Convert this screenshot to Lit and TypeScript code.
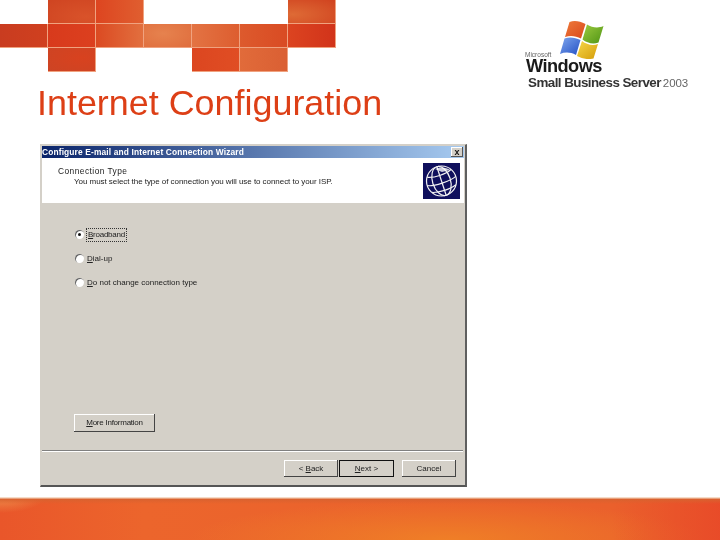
import { LitElement, html, css, svg } from "lit";
import { customElement } from "lit/decorators.js";

const cells: [number, number, string][] = [
  [2, 1, "radial-gradient(ellipse at 80% 70%,#d9532a,#cf4421)"],
  [3, 1, "linear-gradient(90deg,#dd4520,#e05f30)"],
  [7, 1, "radial-gradient(ellipse at 10% 60%,#de6a35,#d0421f)"],
  [1, 2, "linear-gradient(90deg,#c93c20,#d0401f)"],
  [2, 2, "linear-gradient(90deg,#d83a1c,#dc401f)"],
  [3, 2, "linear-gradient(90deg,#db4a22,#e2703f)"],
  [4, 2, "radial-gradient(ellipse at 40% 40%,#e6824e,#df6c3c)"],
  [5, 2, "linear-gradient(90deg,#e37343,#dd5d2f)"],
  [6, 2, "linear-gradient(90deg,#dd5a2d,#d94b23)"],
  [7, 2, "linear-gradient(90deg,#dc4420,#d1331a)"],
  [2, 3, "radial-gradient(ellipse at 70% 40%,#d8421f,#cc4424)"],
  [5, 3, "linear-gradient(90deg,#dc4620,#e04e24)"],
  [6, 3, "linear-gradient(90deg,#e16b3a,#da5f33)"],
];

const globe = svg`<svg width="37" height="36" viewBox="0 0 37 36">
  <rect width="37" height="36" fill="#0f0f5c"/>
  <g fill="none" stroke="#f2f2f2" stroke-width="1.200">
    <circle cx="18.500" cy="18" r="15"/>
    <g transform="rotate(-18 18.500 18)">
      <ellipse cx="18.500" cy="18" rx="9" ry="15"/>
      <path d="M18.500 3V33"/>
      <path d="M3.500 18C10 21 27 21 33.500 18"/>
      <path d="M6 10C12 13 25 13 31 10"/>
      <path d="M6 26C12 28.500 25 28.500 31 26"/>
    </g>
  </g>
  <path d="M12 6C16 3.500 24 4 27 7L19 9Z" fill="#fff" opacity=".8"/>
</svg>`;

const flag = svg`<svg class="flag" width="44" height="38" viewBox="0 0 44 38">
  <defs>
    <linearGradient id="r" x1="0" y1="0" x2="1" y2="1"><stop offset="0" stop-color="#ee7a3a"/><stop offset="1" stop-color="#d9481c"/></linearGradient>
    <linearGradient id="g" x1="0" y1="0" x2="1" y2="1"><stop offset="0" stop-color="#9ccb3f"/><stop offset="1" stop-color="#4f9414"/></linearGradient>
    <linearGradient id="b" x1="0" y1="0" x2="1" y2="1"><stop offset="0" stop-color="#7ea6ee"/><stop offset="1" stop-color="#2450c4"/></linearGradient>
    <linearGradient id="y" x1="0" y1="0" x2="1" y2="1"><stop offset="0" stop-color="#f7d84a"/><stop offset="1" stop-color="#d49c08"/></linearGradient>
  </defs>
  <path d="M9.500 1C15 -1 20 0.500 25.500 3L21 17.500C16 15 10.500 14 5 16Z" fill="url(#r)"/>
  <path d="M27 3.500C32 6.500 38 7.500 43.500 5L38.500 21.500C33 23.500 27 22 22.500 18.500Z" fill="url(#g)"/>
  <path d="M4.500 17.500C10 15.500 15 16.500 20.500 19L16 34C10.500 31 5 31 0 33Z" fill="url(#b)"/>
  <path d="M22 20C26.500 23.500 32.500 25 38 23L33.500 37.500C27.500 39 22 37.500 17 35Z" fill="url(#y)"/>
</svg>`;

@customElement("app-root")
export class AppRoot extends LitElement {
  static styles = css`
    :host { display: block; width: 720px; height: 540px; background: #fff; overflow: hidden; font-family: "Liberation Sans", Arial, sans-serif; }
    .page { height: 540px; display: flex; flex-direction: column; }
    .top { display: flex; height: 144px; flex: none; }
    .left { width: 525px; flex: none; }
    .mosaic { display: grid; grid-template-columns: repeat(7, 48px); grid-auto-rows: 24px; width: 336px; height: 72px; }
    .cell { box-shadow: inset -1px -1px 0 #f0a27f; filter: blur(.3px); }
    h1 { margin: 12px 0 0 37px; font-size: 35.900px; line-height: 38px; font-weight: 400; color: #dd3f16; white-space: nowrap; filter: blur(.25px); }
    .logo { padding-top: 21px; width: 180px; filter: blur(.35px); color: #111; }
    .flag { display: block; margin-left: 35px; }
    .ms { font-size: 6.500px; line-height: 7px; margin: -8px 0 1px 0; color: #666; }
    .win { font-size: 18.200px; line-height: 15px; font-weight: 700; letter-spacing: -.55px; margin-left: 1px; color: #1a1a1a; }
    .sbs { display: flex; align-items: baseline; margin: 1px 0 0 3px; white-space: nowrap; font-size: 13.400px; line-height: 15px; font-weight: 700; letter-spacing: -.55px; color: #333; }
    .yr { font-weight: 400; font-size: 11.500px; letter-spacing: -.1px; color: #666; margin-left: 2px; }

    .dialog { margin-left: 40px; width: 427px; height: 343px; flex: none; box-sizing: border-box; background: #d4d0c8; display: flex; flex-direction: column; padding: 1px 1px 0 1px;
      border-top: 1px solid #d4d0c8; border-left: 1px solid #d4d0c8; border-right: 2px solid #5f5f5f; border-bottom: 2px solid #555; }
    .tbar { height: 12px; flex: none; display: flex; align-items: center; justify-content: space-between; background: linear-gradient(90deg,#0a246a,#a6caf0); color: #fff; font: 700 8.400px/12px "Liberation Sans", sans-serif; letter-spacing: .14px; filter: blur(.25px); }
    .close { width: 12px; height: 10px; margin-right: 1px; background: #d4d0c8; color: #111; box-shadow: inset -1px -1px 0 #555, inset 1px 1px 0 #fff; font: 700 9px/10px "Liberation Sans", sans-serif; letter-spacing: 0; text-align: center; }
    .hdr { height: 45px; flex: none; background: #fff; display: flex; justify-content: space-between; }
    .hdr-text { padding: 8px 0 0 16px; font: 400 8px/10px "Liberation Sans", sans-serif; color: #222; filter: blur(.35px); }
    .hdr-text b { display: block; font-weight: 400; font-size: 8.400px; letter-spacing: .45px; }
    .hdr-text span { display: block; margin: 1px 0 0 16px; letter-spacing: -.05px; white-space: nowrap; }
    .globe { margin: 5px 4px 0 0; filter: blur(.3px); }
    .body { flex: 1; padding: 26px 0 0 32px; display: flex; flex-direction: column; font: 400 8px/12px "Liberation Sans", sans-serif; color: #222; }
    .opt { display: flex; align-items: center; height: 12px; margin-bottom: 12px; filter: blur(.35px); }
    .radio { width: 9px; height: 9px; margin-left: 1px; border-radius: 50%; background: #fff; box-shadow: inset 1px 1px 0 #666; margin-right: 3px; display: flex; align-items: center; justify-content: center; flex: none; position: relative; top: -1px; }
    .radio i { width: 3px; height: 3px; border-radius: 50%; background: #111; }
    .focus { outline: 1px dotted #333; padding: 0 1px; letter-spacing: -.25px; }
    u { text-decoration: underline; }
    .more { margin-top: auto; margin-bottom: 18px; width: 81px; height: 18px; flex: none; letter-spacing: -.25px; }
    .btn { background: #d4d0c8; box-shadow: inset -1px -1px 0 #444, inset 1px 1px 0 #fff; display: flex; align-items: center; justify-content: center; font: 400 8px/12px "Liberation Sans", sans-serif; color: #222; filter: blur(.3px); }
    .sep { height: 2px; flex: none; background: linear-gradient(#808080 50%, #fff 50%); margin-right: 1px; }
    .foot { height: 33px; flex: none; display: flex; justify-content: flex-end; align-items: flex-start; padding: 8px 8px 0 0; box-sizing: border-box; }
    .foot .btn { width: 54px; height: 17px; }
    .foot .next { width: 55px; box-shadow: inset 0 0 0 1px #111; margin: 0 8px 0 1px; }

    .spacer { height: 10px; flex: none; }
    .footer { flex: 1; background: linear-gradient(#f6dcc8 0, #f6dcc8 1px, #d9622f 2px, rgba(217,98,47,0) 7px), radial-gradient(ellipse 45px 16px at 0 0, rgba(238,150,80,.85), rgba(238,150,80,0)), linear-gradient(90deg, rgba(232,72,36,0) 85%, rgba(232,72,40,.85) 100%), radial-gradient(ellipse 260px 40px at 62% 100%, rgba(240,130,38,.9), rgba(240,130,38,0)), linear-gradient(90deg, #e9562a, #ec652c 20%, #ea622c 60%, #ea5f2c); }
  `;

  render() {
    return html`<div class="page">
      <div class="top">
        <div class="left">
          <div class="mosaic">
            ${cells.map(([c, r, bg]) => html`<div class="cell" style="grid-column:${c};grid-row:${r};background:${bg}"></div>`)}
          </div>
          <h1>Internet Configuration</h1>
        </div>
        <div class="logo">
          ${flag}
          <div class="ms">Microsoft</div>
          <div class="win">Windows</div>
          <div class="sbs">Small Business Server<span class="yr">2003</span></div>
        </div>
      </div>
      <div class="dialog">
        <div class="tbar"><span>Configure E-mail and Internet Connection Wizard</span><span class="close">x</span></div>
        <div class="hdr">
          <div class="hdr-text"><b>Connection Type</b><span>You must select the type of connection you will use to connect to your ISP.</span></div>
          <div class="globe">${globe}</div>
        </div>
        <div class="body">
          <div class="opt"><span class="radio"><i></i></span><span class="focus"><u>B</u>roadband</span></div>
          <div class="opt"><span class="radio"></span><span><u>D</u>ial-up</span></div>
          <div class="opt"><span class="radio"></span><span><u>D</u>o not change connection type</span></div>
          <div class="btn more"><span><u>M</u>ore Information</span></div>
        </div>
        <div class="sep"></div>
        <div class="foot">
          <div class="btn"><span>&lt; <u>B</u>ack</span></div>
          <div class="btn next"><span><u>N</u>ext &gt;</span></div>
          <div class="btn">Cancel</div>
        </div>
      </div>
      <div class="spacer"></div>
      <div class="footer"></div>
    </div>`;
  }
}
